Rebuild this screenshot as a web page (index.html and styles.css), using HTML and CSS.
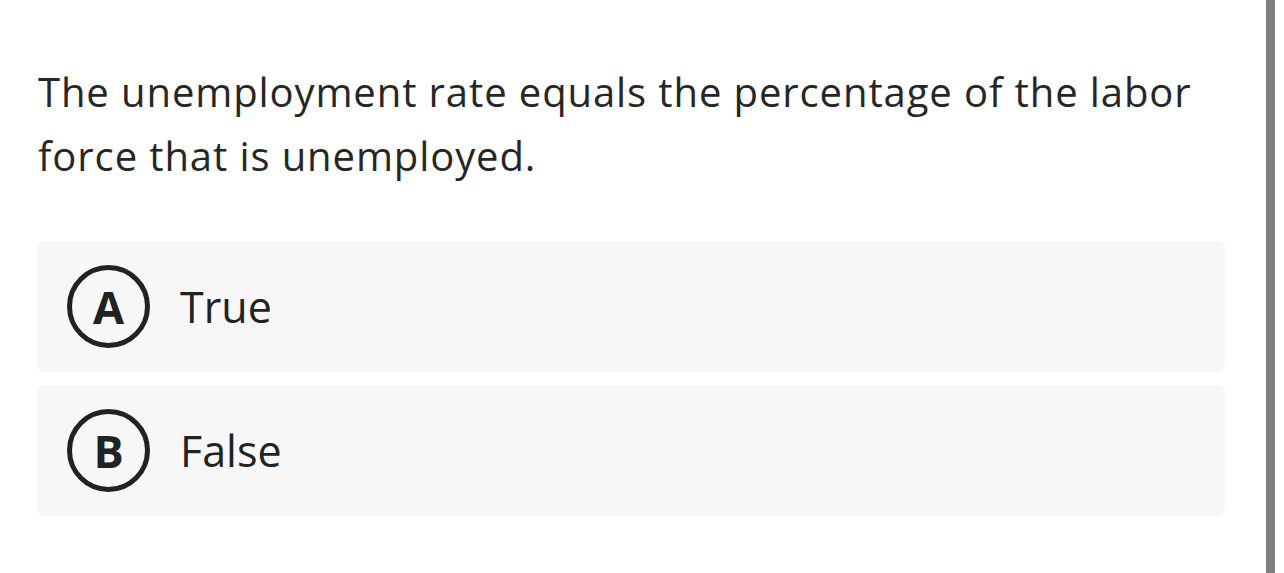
FILE: index.html
```html
<!DOCTYPE html>
<html lang="en">
<head>
<meta charset="utf-8">
<title>Question</title>
<link rel="stylesheet" href="styles.css">
</head>
<body>
<main class="page">
  <p class="question">The unemployment rate equals the percentage of the labor force that is unemployed.</p>
  <div class="options">
    <div class="option">
      <span class="badge">A</span>
      <span class="label">True</span>
    </div>
    <div class="option">
      <span class="badge">B</span>
      <span class="label">False</span>
    </div>
  </div>
</main>
<div class="scrollbar"></div>
</body>
</html>
```

FILE: styles.css
```css
html, body {
  margin: 0;
  padding: 0;
  background: #ffffff;
}
body {
  font-family: "Open Sans", "Noto Sans", sans-serif;
  color: #222222;
  width: 1284px;
  height: 573px;
  overflow: hidden;
}
.page {
  padding: 60px 0 0 37px;
  width: 1188px;
}
.question {
  margin: 0 0 53px 1px;
  font-size: 40px;
  line-height: 64px;
  letter-spacing: 0.9px;
  width: 1180px;
  color: #262626;
}
.options {
  display: flex;
  flex-direction: column;
  gap: 13px;
}
.option {
  display: flex;
  align-items: center;
  height: 131px;
  background: #f7f7f7;
  border-radius: 7px;
  padding-left: 30px;
  gap: 30px;
}
.badge {
  box-sizing: border-box;
  width: 83px;
  height: 83px;
  border: 5px solid #222222;
  border-radius: 50%;
  display: flex;
  align-items: center;
  justify-content: center;
  font-size: 45px;
  font-weight: 700;
  line-height: 1;
}
.label {
  font-size: 43px;
  font-weight: 500;
}
.scrollbar {
  position: absolute;
  top: 0;
  right: 9px;
  width: 9px;
  height: 573px;
  background: #808080;
}
```
